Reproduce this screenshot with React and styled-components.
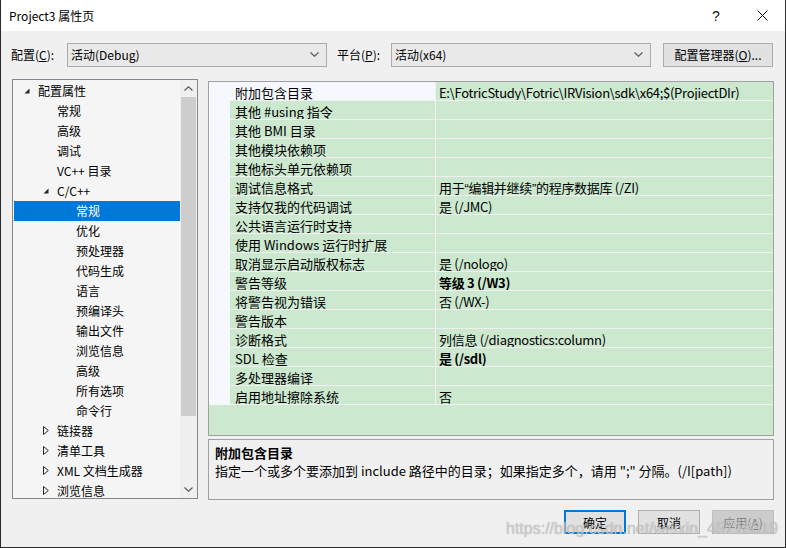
import React from 'react';
import styled, { createGlobalStyle } from 'styled-components';

const GlobalStyle = createGlobalStyle`
  html, body {
    margin: 0;
    padding: 0;
    background: #f0f0f0;
  }
  body {
    font-family: "Noto Sans CJK SC", "Noto Sans", sans-serif;
    color: #000;
  }
`;

const Window = styled.div`
  position: relative;
  width: 786px;
  height: 548px;
  box-sizing: border-box;
  border: 1px solid #2b2b2b;
  border-top: none;
  background: #f0f0f0;
  display: flex;
  flex-direction: column;
  overflow: hidden;
`;

const TitleBar = styled.div`
  height: 31px;
  background: #fff;
  display: flex;
  align-items: center;
  padding-left: 8px;
  font-size: 12px;
`;

const TitleText = styled.div`
  flex: 1;
`;

const TitleButton = styled.div`
  width: 46px;
  height: 31px;
  display: flex;
  align-items: center;
  justify-content: center;
  font-size: 14px;
  font-family: "Liberation Sans", sans-serif;
  color: #111;
`;

const Toolbar = styled.div`
  margin-top: 11px;
  height: 25px;
  display: flex;
  align-items: center;
  padding-left: 10px;
  font-size: 12px;
`;

const Label = styled.div`
  width: ${(p) => p.$w}px;
  line-height: 25px;
`;

const Combo = styled.div`
  width: 260px;
  height: 24px;
  box-sizing: border-box;
  border: 1px solid #acacac;
  background: #e9e9e9;
  display: flex;
  align-items: center;
  padding: 0 7px 0 3px;
  margin-right: ${(p) => p.$mr || 0}px;
`;

const ComboText = styled.div`
  flex: 1;
`;

const Button = styled.div`
  width: ${(p) => p.$w || 62}px;
  height: 24px;
  box-sizing: border-box;
  border: ${(p) => (p.$default ? '2px solid #0078d7' : p.$disabled ? '1px solid #bfbfbf' : '1px solid #adadad')};
  background: ${(p) => (p.$disabled ? '#cccccc' : '#e1e1e1')};
  color: ${(p) => (p.$disabled ? '#838383' : '#000')};
  display: flex;
  align-items: center;
  justify-content: center;
  font-size: 12px;
`;

const U = styled.span`
  text-decoration: underline;
`;

const Main = styled.div`
  margin-top: 12px;
  height: 421px;
  display: flex;
  padding-left: 11px;
  gap: 10px;
`;

const Tree = styled.div`
  width: 186px;
  height: 420px;
  box-sizing: border-box;
  border: 1px solid #828790;
  background: #f5f5f5;
  display: flex;
  overflow: hidden;
`;

const TreeRows = styled.div`
  flex: 1;
  padding: 1px 0 0 1px;
  display: flex;
  flex-direction: column;
`;

const TreeRow = styled.div`
  height: 20px;
  box-sizing: border-box;
  flex-shrink: 0;
  display: flex;
  align-items: center;
  padding-left: ${(p) => 10 + p.$level * 19}px;
  padding-bottom: 1px;
  font-size: 12px;
  background: ${(p) => (p.$sel ? '#0078d7' : 'transparent')};
  color: ${(p) => (p.$sel ? '#fff' : '#000')};
`;

const Expander = styled.div`
  width: 14px;
  height: 19px;
  display: flex;
  align-items: center;
`;

const ScrollBar = styled.div`
  width: 17px;
  background: #f0f0f0;
  display: flex;
  flex-direction: column;
`;

const ScrollArrow = styled.div`
  height: 17px;
  display: flex;
  align-items: center;
  justify-content: center;
`;

const ScrollTrack = styled.div`
  flex: 1;
  padding: 0 1px;
  display: flex;
  flex-direction: column;
`;

const ScrollThumb = styled.div`
  height: 319px;
  background: #cdcdcd;
`;

const RightCol = styled.div`
  width: 566px;
  margin-top: 2px;
  display: flex;
  flex-direction: column;
  gap: 3px;
`;

const Grid = styled.div`
  height: 355px;
  box-sizing: border-box;
  border: 1px solid #a0a0a0;
  background: #cce8cf;
  overflow: hidden;
`;

const GridRow = styled.div`
  display: grid;
  grid-template-columns: 21px 206px 1fr;
  height: 19px;
  font-size: 13px;
`;

const Gutter = styled.div`
  background: #f5f8fc;
`;

const NameCell = styled.div`
  border-bottom: 1px solid #f0f0f0;
  border-right: 1px solid #f0f0f0;
  background: ${(p) => (p.$sel ? '#f5f8fc' : 'transparent')};
  padding: 2px 0 0 5px;
  line-height: 18px;
  white-space: nowrap;
  overflow: hidden;
`;

const ValueCell = styled.div`
  border-bottom: 1px solid #f0f0f0;
  padding: 2px 0 0 3px;
  line-height: 18px;
  letter-spacing: -0.3px;
  white-space: nowrap;
  overflow: hidden;
  font-weight: ${(p) => (p.$bold ? 700 : 400)};
`;

const Quote = styled.span`
  font-family: "Liberation Sans", sans-serif;
`;

const Desc = styled.div`
  height: 61px;
  box-sizing: border-box;
  border: 1px solid #a0a0a0;
  padding: 4px 6px;
  font-size: 13px;
  line-height: 18px;
`;

const DescTitle = styled.div`
  font-weight: 700;
`;

const Footer = styled.div`
  margin-top: 10px;
  display: flex;
  justify-content: flex-end;
  gap: 12px;
  padding-right: 11px;
`;

const Watermark = styled.div`
  position: absolute;
  left: 505px;
  top: 520px;
  font-family: "Liberation Sans", sans-serif;
  font-size: 16px;
  color: rgba(215, 215, 215, 0.75);
  text-shadow: 0 0 1px rgba(110, 110, 110, 0.6);
  pointer-events: none;
  white-space: nowrap;
`;

const Chevron = ({ up }) => (
  <svg width="9" height="5" viewBox="0 0 9 5">
    <path
      d={up ? 'M0.5 4.5 L4.5 0.8 L8.5 4.5' : 'M0.5 0.5 L4.5 4.2 L8.5 0.5'}
      fill="none"
      stroke="#606060"
      strokeWidth="1.3"
    />
  </svg>
);

const OpenArrow = () => (
  <svg width="6" height="6" viewBox="0 0 6 6">
    <path d="M5.5 0.5 L5.5 5.5 L0.5 5.5 Z" fill="#262626" />
  </svg>
);

const ClosedArrow = () => (
  <svg width="6" height="9" viewBox="0 0 6 9">
    <path d="M0.5 0.5 L5.3 4.5 L0.5 8.5 Z" fill="none" stroke="#262626" strokeWidth="1" />
  </svg>
);

const CloseIcon = () => (
  <svg width="11" height="11" viewBox="0 0 11 11">
    <path d="M0.5 0.5 L10.5 10.5 M10.5 0.5 L0.5 10.5" stroke="#111" strokeWidth="1" />
  </svg>
);

const treeItems = [
  { t: '配置属性', l: 0, a: 'open' },
  { t: '常规', l: 1 },
  { t: '高级', l: 1 },
  { t: '调试', l: 1 },
  { t: 'VC++ 目录', l: 1 },
  { t: 'C/C++', l: 1, a: 'open' },
  { t: '常规', l: 2, sel: true },
  { t: '优化', l: 2 },
  { t: '预处理器', l: 2 },
  { t: '代码生成', l: 2 },
  { t: '语言', l: 2 },
  { t: '预编译头', l: 2 },
  { t: '输出文件', l: 2 },
  { t: '浏览信息', l: 2 },
  { t: '高级', l: 2 },
  { t: '所有选项', l: 2 },
  { t: '命令行', l: 2 },
  { t: '链接器', l: 1, a: 'closed' },
  { t: '清单工具', l: 1, a: 'closed' },
  { t: 'XML 文档生成器', l: 1, a: 'closed' },
  { t: '浏览信息', l: 1, a: 'closed' },
];

const props = [
  { n: '附加包含目录', v: 'E:\\FotricStudy\\Fotric\\IRVision\\sdk\\x64;$(ProjiectDIr)', sel: true },
  { n: '其他 #using 指令', v: '' },
  { n: '其他 BMI 目录', v: '' },
  { n: '其他模块依赖项', v: '' },
  { n: '其他标头单元依赖项', v: '' },
  {
    n: '调试信息格式',
    v: (
      <>
        用于<Quote>“</Quote>编辑并继续<Quote>”</Quote>的程序数据库 (/ZI)
      </>
    ),
  },
  { n: '支持仅我的代码调试', v: '是 (/JMC)' },
  { n: '公共语言运行时支持', v: '' },
  { n: '使用 Windows 运行时扩展', v: '' },
  { n: '取消显示启动版权标志', v: '是 (/nologo)' },
  { n: '警告等级', v: '等级 3 (/W3)', b: true },
  { n: '将警告视为错误', v: '否 (/WX-)' },
  { n: '警告版本', v: '' },
  { n: '诊断格式', v: '列信息 (/diagnostics:column)' },
  { n: 'SDL 检查', v: '是 (/sdl)', b: true },
  { n: '多处理器编译', v: '' },
  { n: '启用地址擦除系统', v: '否' },
];

export default function App() {
  return (
    <>
      <GlobalStyle />
      <Window>
        <TitleBar>
          <TitleText>Project3 属性页</TitleText>
          <TitleButton>?</TitleButton>
          <TitleButton>
            <CloseIcon />
          </TitleButton>
        </TitleBar>

        <Toolbar>
          <Label $w={56}>
            配置(<U>C</U>):
          </Label>
          <Combo $mr={10}>
            <ComboText>活动(Debug)</ComboText>
            <Chevron />
          </Combo>
          <Label $w={54}>
            平台(<U>P</U>):
          </Label>
          <Combo $mr={12}>
            <ComboText>活动(x64)</ComboText>
            <Chevron />
          </Combo>
          <Button $w={110}>
            配置管理器(<U>O</U>)...
          </Button>
        </Toolbar>

        <Main>
          <Tree>
            <TreeRows>
              {treeItems.map((it, i) => (
                <TreeRow key={i} $level={it.l} $sel={it.sel}>
                  <Expander>
                    {it.a === 'open' && <OpenArrow />}
                    {it.a === 'closed' && <ClosedArrow />}
                  </Expander>
                  {it.t}
                </TreeRow>
              ))}
            </TreeRows>
            <ScrollBar>
              <ScrollArrow>
                <Chevron up />
              </ScrollArrow>
              <ScrollTrack>
                <ScrollThumb />
              </ScrollTrack>
              <ScrollArrow>
                <Chevron />
              </ScrollArrow>
            </ScrollBar>
          </Tree>

          <RightCol>
            <Grid>
              {props.map((p, i) => (
                <GridRow key={i}>
                  <Gutter />
                  <NameCell $sel={p.sel}>{p.n}</NameCell>
                  <ValueCell $bold={p.b}>{p.v}</ValueCell>
                </GridRow>
              ))}
            </Grid>
            <Desc>
              <DescTitle>附加包含目录</DescTitle>
              <div>指定一个或多个要添加到 include 路径中的目录；如果指定多个，请用 ";" 分隔。(/I[path])</div>
            </Desc>
          </RightCol>
        </Main>

        <Footer>
          <Button $default>确定</Button>
          <Button>取消</Button>
          <Button $disabled>
            应用(<U>A</U>)
          </Button>
        </Footer>

        <Watermark>https://blog.csdn.net/weixin_45718619</Watermark>
      </Window>
    </>
  );
}
